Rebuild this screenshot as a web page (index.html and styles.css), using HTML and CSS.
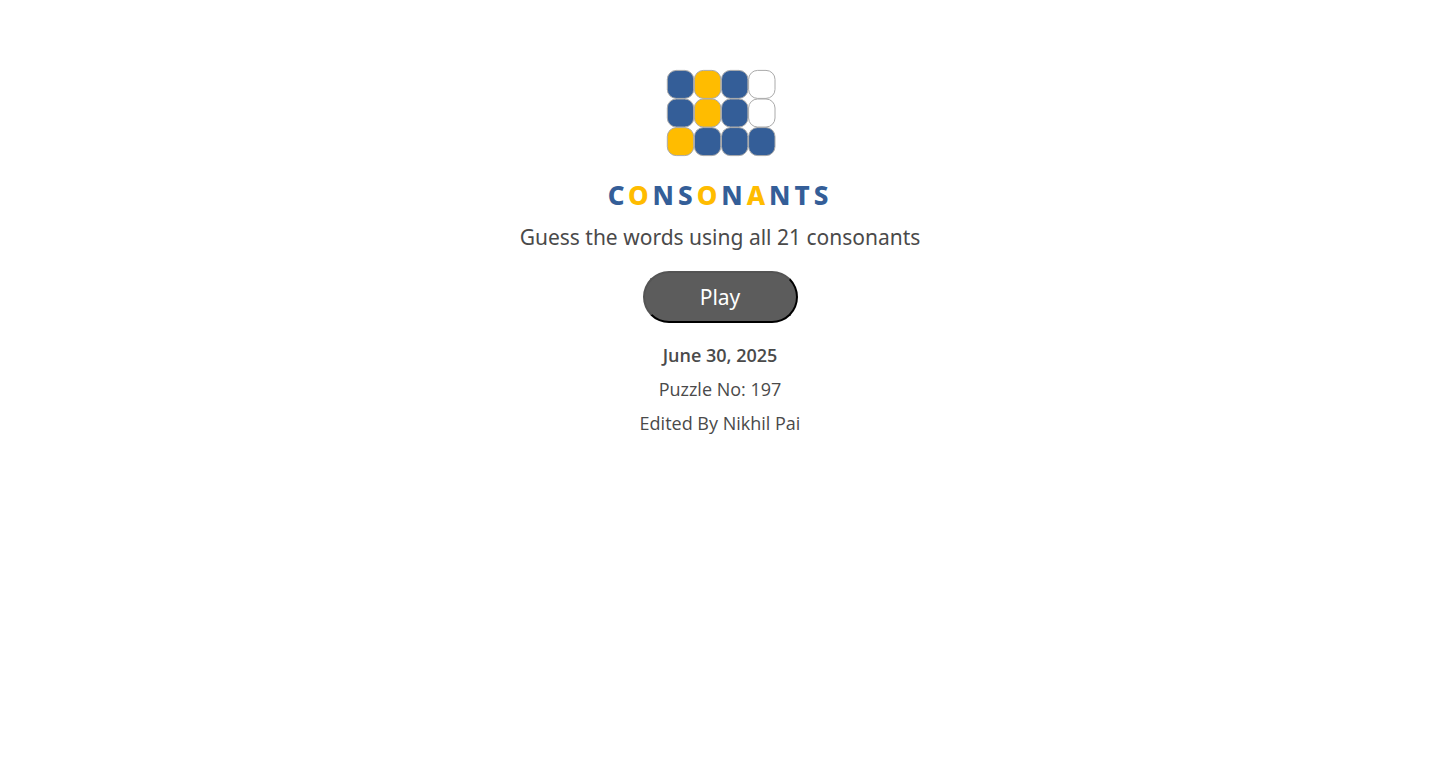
FILE: index.html
```
<!DOCTYPE html>
<html lang="en">
<head>
    <meta charset="UTF-8">
    <meta name="viewport" content="width=device-width, initial-scale=1.0">
    <title>Consonants</title>
    <link rel="stylesheet" href="styles.css">
</head>
<body>
    <main class="start-screen">
        <svg class="logo" viewBox="0 0 110 88" role="img" aria-label="Consonants logo">
            <g class="tiles">
                <rect class="blue" x="2.3" y="1.4" width="26.4" height="28" rx="9"/>
                <rect class="yellow" x="29.4" y="1.4" width="26.4" height="28" rx="9"/>
                <rect class="blue" x="56.5" y="1.4" width="26.4" height="28" rx="9"/>
                <rect class="empty" x="83.6" y="1.4" width="26.4" height="28" rx="9"/>
                <rect class="blue" x="2.3" y="30" width="26.4" height="28" rx="9"/>
                <rect class="yellow" x="29.4" y="30" width="26.4" height="28" rx="9"/>
                <rect class="blue" x="56.5" y="30" width="26.4" height="28" rx="9"/>
                <rect class="empty" x="83.6" y="30" width="26.4" height="28" rx="9"/>
                <rect class="yellow" x="2.3" y="58.6" width="26.4" height="28" rx="9"/>
                <rect class="blue" x="29.4" y="58.6" width="26.4" height="28" rx="9"/>
                <rect class="blue" x="56.5" y="58.6" width="26.4" height="28" rx="9"/>
                <rect class="blue" x="83.6" y="58.6" width="26.4" height="28" rx="9"/>
            </g>
        </svg>
        <h1 class="title">C<span class="vowel">O</span>NS<span class="vowel">O</span>N<span class="vowel">A</span>NTS</h1>
        <p class="tagline">Guess the words using all 21 consonants</p>
        <button class="play-button" type="button">Play</button>
        <p class="date">June 30, 2025</p>
        <p class="info">Puzzle No: 197</p>
        <p class="info">Edited By Nikhil Pai</p>
    </main>
</body>
</html>
```
FILE: styles.css
```
body {
    font-family: 'Open Sans', sans-serif;
    margin: 0;
    color: #4a4a4a;
    background-color: white;
}

.start-screen {
    display: flex;
    flex-direction: column;
    align-items: center;
    padding: 69px 16px 16px;
    text-align: center;
}

.logo {
    width: 110px;
    height: 88px;
    overflow: visible;
}

.tiles {
    stroke: #aaa;
    stroke-width: 1;
}

.blue {
    fill: #345e98;
}

.yellow {
    fill: #ffbc00;
}

.empty {
    fill: white;
}

.title {
    margin: 20px 0 0;
    color: #345e98;
    font-family: 'Noto Sans', sans-serif;
    font-size: 26px;
    font-weight: 800;
    line-height: 36px;
    letter-spacing: 4px;
}

.vowel {
    color: #ffbc00;
}

.tagline {
    margin: 8px 0 0;
    font-family: 'Noto Sans', sans-serif;
    font-size: 21px;
    line-height: 32px;
}

.play-button {
    width: 155px;
    height: 52px;
    margin: 18px 0 15px;
    border: 2px outset black;
    border-radius: 26px;
    background-color: #5c5c5c;
    color: white;
    font-family: 'Noto Sans', sans-serif;
    font-size: 21px;
    cursor: pointer;
}

.date,
.info {
    margin: 0;
    font-size: 18px;
    line-height: 34px;
}

.date {
    font-weight: 600;
}
```
